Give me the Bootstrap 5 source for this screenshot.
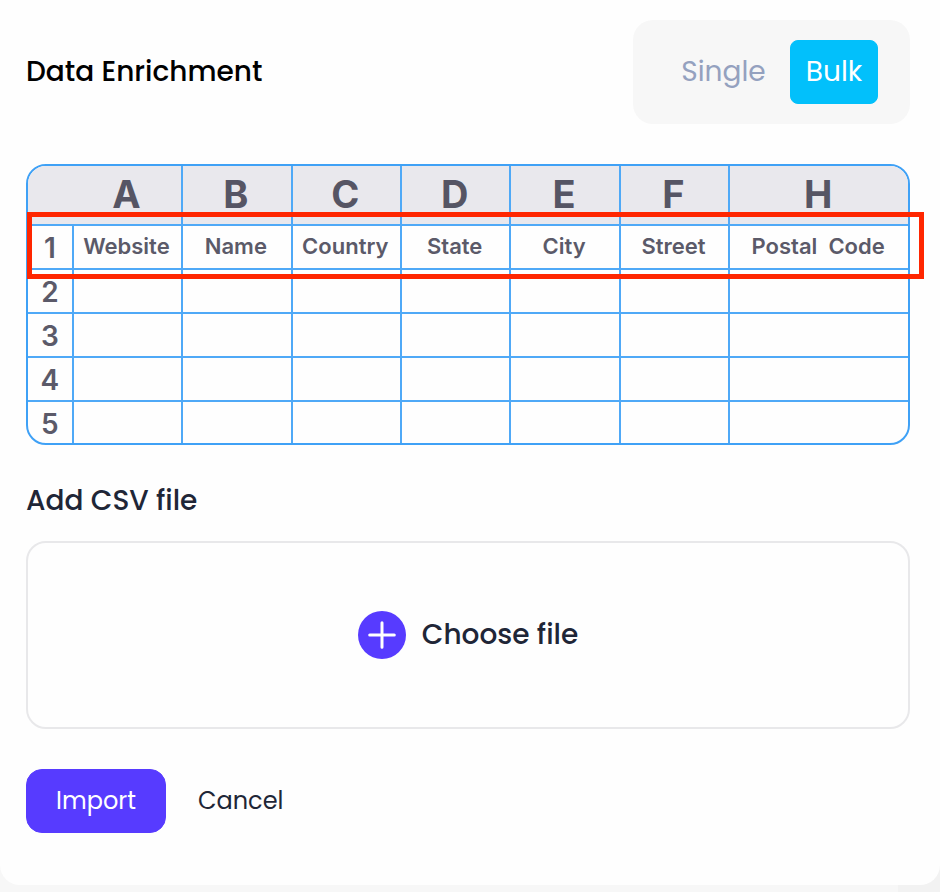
<!DOCTYPE html>
<html lang="en">
<head>
<meta charset="utf-8">
<meta name="viewport" content="width=device-width, initial-scale=1">
<title>Data Enrichment</title>
<link href="https://cdn.jsdelivr.net/npm/bootstrap@5.3.0/dist/css/bootstrap.min.css" rel="stylesheet">
<style>
  body { background: linear-gradient(to right, #f7f7f7 calc(100% - 42px), #f2f2f2 0); font-family: Poppins, Inter, sans-serif; color: #1f2637; font-size: 28px; line-height: 40px; }
  .panel { background: #fefefe; padding: 20px 30px 52px 26px; border-radius: 0 0 20px 20px; }
  .title { font-size: 28px; line-height: 40px; font-weight: 500; }
  .switcher { background: #f7f7f7; border-radius: 20px; padding: 20px 32px; }
  .switcher .btn { --bs-btn-color: #94a1bf; --bs-btn-hover-color: #94a1bf; --bs-btn-active-color: #fff; --bs-btn-active-bg: #02c0fb; --bs-btn-active-border-color: #02c0fb; --bs-btn-font-size: 28px; --bs-btn-line-height: 40px; --bs-btn-padding-x: 12px; --bs-btn-padding-y: 11px; --bs-btn-border-radius: 8px; min-width: 88px; }
  .switcher .wide { min-width: 117px; }
  .sheet { margin-top: 40px; margin-bottom: 36px; }
  .sheet-frame { border: 2px solid #3fa1f6; border-radius: 20px; }
  .sheet table { table-layout: fixed; border-collapse: separate; border-spacing: 0; font-family: Inter, sans-serif; color: #5b5a69; }
  .sheet th, .sheet td { padding: 0 2px 2px 0; text-align: center; vertical-align: middle; border: 0 solid #4fa9f7; border-right-width: 2px; border-bottom-width: 2px; height: 44px; font-size: 22px; line-height: 28px; font-weight: 600; white-space: pre; }
  .sheet thead th { height: 60px; background: #e9e8ed; font-size: 38px; line-height: 40px; font-weight: 700; color: #565564; }
  .sheet tbody th { font-size: 28px; padding: 2px 0 0; }
  .sheet thead th:first-child { border-right-width: 0; }
  .sheet tr > :last-child { border-right-width: 0; }
  .sheet tbody tr:last-child > * { border-bottom-width: 0; height: 41px; }
  .c-num { width: 5.2%; }
  .c-last { width: 20.2%; }
  .marker { top: 48px; left: 1px; right: -14px; height: 67px; border: 5px solid #ff2600; pointer-events: none; }
  .dropzone { border: 2px solid #e8e8ea; border-radius: 20px; padding: 68px 20px; margin-top: 20px; margin-bottom: 40px; cursor: pointer; font-weight: 500; }
  .actions .btn { --bs-btn-font-size: 24px; --bs-btn-line-height: 36px; --bs-btn-padding-y: 13px; --bs-btn-border-radius: 16px; }
  .btn-import { --bs-btn-color: #fff; --bs-btn-bg: #573bff; --bs-btn-border-color: #573bff; --bs-btn-hover-color: #fff; --bs-btn-hover-bg: #482ee6; min-width: 140px; }
  .btn-cancel { --bs-btn-color: #1f2637; --bs-btn-padding-x: 31px; }
</style>
</head>
<body>
<main class="panel">
  <header class="d-flex justify-content-between align-items-center">
    <h1 class="title text-black mb-0">Data Enrichment</h1>
    <div class="switcher d-flex gap-2" role="group" aria-label="Mode">
      <input type="radio" class="btn-check" name="mode" id="single">
      <label class="btn wide" for="single">Single</label>
      <input type="radio" class="btn-check" name="mode" id="bulk" checked>
      <label class="btn" for="bulk">Bulk</label>
    </div>
  </header>

  <div class="sheet position-relative">
    <div class="sheet-frame overflow-hidden">
      <table class="w-100">
        <colgroup><col class="c-num"><col><col><col><col><col><col><col class="c-last"></colgroup>
        <thead><tr><th></th><th>A</th><th>B</th><th>C</th><th>D</th><th>E</th><th>F</th><th>H</th></tr></thead>
        <tbody>
          <tr><th>1</th><td>Website</td><td>Name</td><td>Country</td><td>State</td><td>City</td><td>Street</td><td>Postal  Code</td></tr>
          <tr><th>2</th><td></td><td></td><td></td><td></td><td></td><td></td><td></td></tr>
          <tr><th>3</th><td></td><td></td><td></td><td></td><td></td><td></td><td></td></tr>
          <tr><th>4</th><td></td><td></td><td></td><td></td><td></td><td></td><td></td></tr>
          <tr><th>5</th><td></td><td></td><td></td><td></td><td></td><td></td><td></td></tr>
        </tbody>
      </table>
    </div>
    <div class="marker position-absolute"></div>
  </div>

  <h2 class="title mb-0">Add CSV file</h2>
  <input type="file" class="visually-hidden" id="csv" accept=".csv">
  <label class="dropzone d-flex justify-content-center align-items-center gap-3" for="csv">
    <svg width="48" height="48" viewBox="0 0 48 48" aria-hidden="true"><circle cx="24" cy="24" r="24" fill="#573bff"/><path d="M24 11.7v24.6M11.7 24h24.6" stroke="#fff" stroke-width="3" stroke-linecap="round"/></svg>
    <span>Choose file</span>
  </label>

  <div class="actions d-flex">
    <button type="button" class="btn btn-import">Import</button>
    <button type="button" class="btn btn-cancel">Cancel</button>
  </div>
</main>
<script src="https://cdn.jsdelivr.net/npm/bootstrap@5.3.0/dist/js/bootstrap.bundle.min.js"></script>
</body>
</html>
